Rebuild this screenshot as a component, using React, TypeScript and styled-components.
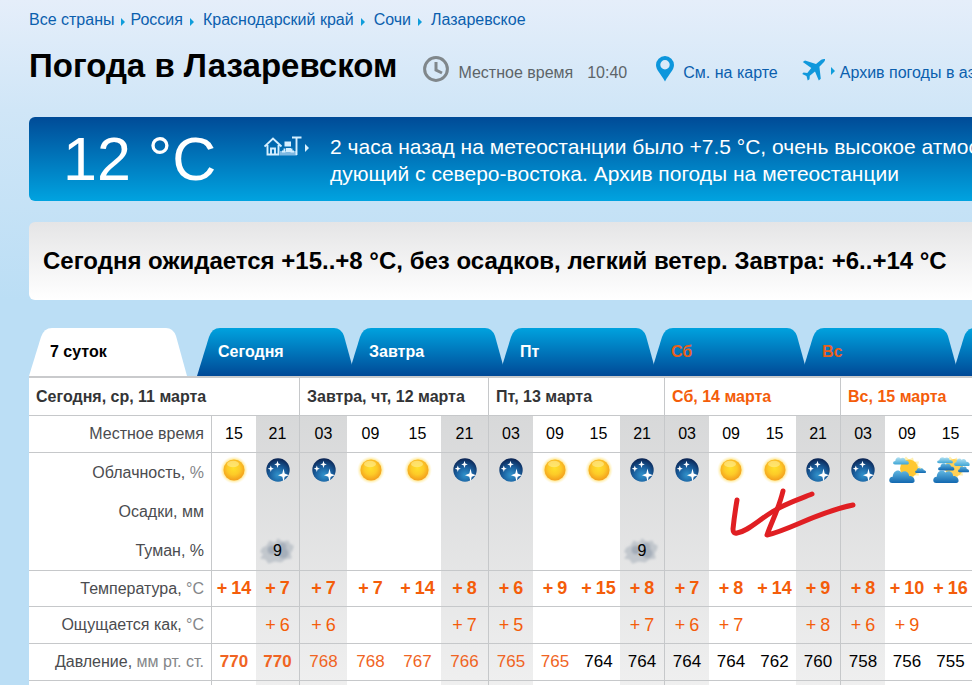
import React from 'react';
import styled, { createGlobalStyle } from 'styled-components';

const GlobalStyle = createGlobalStyle`
  * { box-sizing: border-box; }
  html { overflow-x: hidden; }
  body {
    margin: 0;
    min-height: 100vh;
    overflow-x: hidden;
    background: #bbdef5 linear-gradient(#e5eefa, #d0e6f7 110px, #bbdef5 300px) no-repeat;
    font-family: "Liberation Sans", Arial, sans-serif;
    font-size: 16px;
    color: #000;
  }
`;

const Page = styled.main`
  padding-left: 29px;
  overflow: hidden;
`;

const Breadcrumbs = styled.nav`
  display: flex;
  align-items: center;
  height: 40px;
  white-space: nowrap;
`;

const Link = styled.a`
  color: #0b5fae;
  text-decoration: none;
  white-space: nowrap;
  &:hover { text-decoration: underline; }
`;

const Arrow = styled.span<{ $before?: number; $after?: number; $light?: boolean }>`
  flex: none;
  margin: 3px ${p => p.$after ?? 5}px 0 ${p => p.$before ?? 7}px;
  border: 4px solid transparent;
  border-left-color: ${p => (p.$light ? '#d8f1ff' : '#0f9ddb')};
  border-right-width: 0;
`;

const TitleRow = styled.header`
  display: flex;
  align-items: center;
  height: 56px;
  padding-top: 2px;
  white-space: nowrap;
`;

const Title = styled.h1`
  margin: 0 26px 6px 0;
  font-size: 33px;
  line-height: 40px;
`;

const Meta = styled.div<{ $gap: number; $after: number }>`
  display: flex;
  align-items: center;
  gap: ${p => p.$gap}px;
  margin-right: ${p => p.$after}px;
  color: #5d6468;
  svg { flex: none; }
`;

const MetaText = styled.span`
  padding-top: 8px;
`;

const Clock = styled.time`
  padding: 8px 0 0 5px;
`;

const Current = styled.section`
  display: flex;
  height: 84px;
  margin-top: 21px;
  padding-left: 34px;
  border-radius: 6px 0 0 6px;
  background: linear-gradient(#004b97, #00a3e0);
  color: #fff;
  white-space: nowrap;
`;

const Temperature = styled.div`
  width: 201px;
  flex: none;
  font-size: 61px;
  line-height: 84px;
`;

const Station = styled.div`
  display: flex;
  flex: none;
  width: 66px;
  height: 24px;
  margin-top: 17px;
  align-items: center;
`;

const Report = styled.p`
  margin: 16px 0 0;
  font-size: 21px;
  line-height: 27px;
`;

const Forecast = styled.h2`
  height: 78px;
  margin: 21px 0 0;
  padding-left: 14px;
  border-radius: 6px 0 0 6px;
  background: linear-gradient(#e5e5e6, #fff);
  font-size: 24px;
  line-height: 78px;
  white-space: nowrap;
`;

const Tabs = styled.div`
  display: flex;
  margin-top: 28px;
  border-bottom: 2px solid #c9cacc;
`;

const Tab = styled.button<{ $active?: boolean; $holiday?: boolean }>`
  flex: none;
  width: 158px;
  height: 48px;
  margin: 0 ${p => (p.$active ? 10 : -7)}px 0 0;
  padding: 0 21px;
  border: 0;
  background: ${p => (p.$active ? '#fff' : 'linear-gradient(#00a2de, #004996)')};
  clip-path: path("M0 48 L12 9 Q15 0 23 0 H137 Q144 0 147 8 L158 48 Z");
  color: ${p => (p.$active ? '#000' : p.$holiday ? '#e8601c' : '#fff')};
  font: bold 16px/48px "Liberation Sans", Arial, sans-serif;
  text-align: left;
  cursor: pointer;
`;

const Board = styled.div`
  position: relative;
  background: #fff;
`;

const Table = styled.table`
  width: 100%;
  table-layout: fixed;
  border-collapse: separate;
  border-spacing: 0;
`;

const Column = styled.col<{ $width?: number; $night?: boolean }>`
  width: ${p => (p.$width ? `${p.$width}px` : 'auto')};
  background: ${p => (p.$night ? 'linear-gradient(#d4d5d6, #f2f2f2)' : '#fff')};
`;

const Row = styled.tr<{ $height: number }>`
  height: ${p => p.$height}px;
`;

const line = '1px solid #c6c8ca';

const DayHead = styled.th<{ $holiday?: boolean }>`
  padding: 0 0 0 7px;
  border-bottom: ${line};
  border-right: ${line};
  background: #fff;
  color: ${p => (p.$holiday ? '#f45d0a' : '#333436')};
  font-size: 16px;
  text-align: left;
  white-space: nowrap;
  &:last-child { border-right: 0; }
`;

const RowHead = styled.th<{ $open?: boolean }>`
  padding: 0 7px 0 0;
  border-right: ${line};
  border-bottom: ${p => (p.$open ? '0' : line)};
  background: #fff;
  color: #4b4c4f;
  font-size: 16px;
  font-weight: normal;
  text-align: right;
  white-space: nowrap;
`;

const Unit = styled.span`
  color: #848689;
`;

const Cell = styled.td<{ $open?: boolean; $dayEnd?: boolean }>`
  padding: 0;
  border-bottom: ${p => (p.$open ? '0' : line)};
  border-right: ${p => (p.$dayEnd ? line : '0')};
  font-size: 16px;
  line-height: 20px;
  text-align: center;
  white-space: nowrap;
`;

const SkyBox = styled.div`
  display: flex;
  justify-content: center;
  height: 33px;
  svg { flex: none; }
`;

const Degrees = styled.span<{ $strong?: boolean }>`
  display: inline-flex;
  gap: 4px;
  color: #f45d0a;
  font-size: 18px;
  font-weight: ${p => (p.$strong ? 'bold' : 'normal')};
`;

const Pressure = styled.span<{ $level: string }>`
  color: ${p => (p.$level === 'n' ? '#000' : '#f06423')};
  font-size: 17px;
  font-weight: ${p => (p.$level === 'b' ? 'bold' : 'normal')};
`;

const FogBadge = styled.div`
  display: grid;
  place-items: center;
  > * { grid-area: 1 / 1; }
`;

const FogValue = styled.span`
  z-index: 1;
`;

const Marks = styled.svg`
  position: absolute;
  left: 699px;
  top: 106px;
  pointer-events: none;
`;

const ClockIcon = () => (
  <svg width="26" height="26" viewBox="0 0 26 26" fill="none" stroke="#80878b" aria-hidden="true">
    <circle cx="13" cy="13" r="11.4" strokeWidth="3" />
    <path d="M13 6v8l6 3" strokeWidth="3" />
  </svg>
);

const PinIcon = () => (
  <svg width="18" height="26" viewBox="0 0 18 26" aria-hidden="true">
    <path fill="#0d96dc" fillRule="evenodd" d="M9 0a9 9 0 0 1 9 9c0 5-5 9-9 16.500C5 18 0 14 0 9a9 9 0 0 1 9-9Zm0 4a4.700 4.700 0 1 0 0 9.400A4.700 4.700 0 0 0 9 4Z" />
  </svg>
);

const PlaneIcon = () => (
  <svg width="24" height="26" viewBox="0 -3 24 26" fill="#1098dc" aria-hidden="true">
    <path d="M23 0c-2-.4-3.600.5-5 1.700L14 5 3 1.500.8 3l8.500 6-4 5L1.500 13.600.2 15l4.300 2 1.200 4.500L7.500 20.300l.3-3.600 5.200-4.200 3.800 9 2-1.700-1.400-12 3.600-3.700C22.500 2.500 23.300 1.300 23 0Z" />
  </svg>
);

const StationIcon = () => (
  <svg width="38" height="20" viewBox="0 0 38 20" fill="none" stroke="#d5efff" strokeWidth="1.900" aria-hidden="true">
    <path d="M.5 10.500 9 2.500l8.500 8M3.500 9v9.500h11V9M7 18.500v-6h4v6" />
    <path d="M16 15h17v4.500H16z" fill="#7fb9e2" stroke="none" />
    <path d="M20.500 5.500h6.500v5h-6.500zM22 12h5v4h-5z" fill="#d5efff" stroke="none" />
    <path d="M18 15.500h2.500v-3m7 0v3H30M32.500 19V1.500M28 1.500h9.500" />
  </svg>
);

const Sun = () => (
  <svg width="28" height="28" viewBox="0 0 28 28" role="img" aria-label="ясно">
    <defs>
      <radialGradient id="sunGlow">
        <stop offset=".7" stopColor="#ffdf6b" />
        <stop offset="1" stopColor="#fff4c4" stopOpacity="0" />
      </radialGradient>
      <radialGradient id="sunFace" cx=".48" cy=".42" r=".6">
        <stop offset="0" stopColor="#ffe02b" />
        <stop offset=".5" stopColor="#fdcb28" />
        <stop offset="1" stopColor="#f29a1c" />
      </radialGradient>
    </defs>
    <circle cx="14" cy="14" r="14" fill="url(#sunGlow)" />
    <circle cx="14" cy="14" r="10.500" fill="url(#sunFace)" />
    <ellipse cx="13" cy="8" rx="6" ry="3.200" fill="#fff0a0" opacity=".55" />
  </svg>
);

const Night = () => (
  <svg width="28" height="28" viewBox="-2 -2 28 28" role="img" aria-label="ясная ночь">
    <defs>
      <radialGradient id="nightSky" cx=".5" cy=".72" r=".7">
        <stop offset="0" stopColor="#3193cc" />
        <stop offset=".5" stopColor="#1a609f" />
        <stop offset="1" stopColor="#0b2554" />
      </radialGradient>
    </defs>
    <circle cx="12" cy="12" r="11.700" fill="url(#nightSky)" />
    <g fill="#fff">
      <path d="m17.500 10.500 1.200 5 4.300 1.700-4.300 1.500-1.200 5-1.200-5-4.300-1.500 4.300-1.700Z" />
      <path d="m11.500 2.800.9 2.700 2.400.9-2.400.9-.9 2.700-.9-2.700-2.400-.9 2.400-.9Z" />
      <path d="m4.800 7.500.8 2.300 2.200.9-2.200.9-.8 2.300-.8-2.300-2.200-.9 2.200-.9Z" />
    </g>
  </svg>
);

const cloudShape = 'M3 12C-1 12-.5 7 3.500 7 4 2 9 .5 11.500 3.500 16 1 19 4 19 6.500 24 6 26 12 22 12Z';

const CloudDefs = () => (
  <defs>
    <linearGradient id="cloudDark" x2="0" y2="1">
      <stop offset="0" stopColor="#62b8e2" />
      <stop offset="1" stopColor="#1268b0" />
    </linearGradient>
    <linearGradient id="cloudLight" x2="0" y2="1">
      <stop offset="0" stopColor="#b5e2f2" />
      <stop offset="1" stopColor="#3fa6d6" />
    </linearGradient>
  </defs>
);

const PartlyCloudy = () => (
  <svg width="38" height="28" viewBox="0 0 38 28" role="img" aria-label="облачно">
    <CloudDefs />
    <path d="m12 2 3 2L18 .5l3 3 4-2 1 4 5 0-1 4 4 3-4 2 1 5-5 0-1 5-4-3Z" fill="#fff0b0" />
    <circle cx="21" cy="12.500" r="9" fill="#ffc832" />
    <path d={cloudShape} fill="url(#cloudLight)" transform="translate(5 0) scale(.66 .7)" />
    <path d={cloudShape} fill="url(#cloudDark)" transform="translate(27 11) scale(.46 .5)" />
    <path d={cloudShape} fill="url(#cloudDark)" transform="translate(1 12) scale(1.060 1.250)" />
  </svg>
);

const MostlyCloudy = () => (
  <svg width="38" height="28" viewBox="0 0 38 28" role="img" aria-label="переменная облачность">
    <CloudDefs />
    <path d="m12 2 3 2L18 .5l3 3 4-2 1 4 5 0-1 4 4 3-4 2 1 5-5 0-1 5-4-3Z" fill="#fff0b0" />
    <circle cx="22" cy="12" r="9" fill="#ffd056" />
    <path d={cloudShape} fill="url(#cloudLight)" transform="translate(5 0) scale(.66 .6)" />
    <path d={cloudShape} fill="url(#cloudLight)" transform="translate(22 1) scale(.65 .75)" />
    <path d={cloudShape} fill="url(#cloudDark)" transform="translate(6 6) scale(.68 .7)" />
    <path d={cloudShape} fill="url(#cloudDark)" transform="translate(26 9) scale(.46 .6)" />
    <path d={cloudShape} fill="url(#cloudDark)" transform="translate(1 12) scale(1.060 1.250)" />
  </svg>
);

const Fog = () => (
  <svg width="38" height="28" viewBox="0 0 36 26" aria-hidden="true">
    <defs>
      <filter id="fogBlur" x="-20%" y="-20%" width="140%" height="140%">
        <feGaussianBlur stdDeviation="1.200" />
      </filter>
    </defs>
    <g filter="url(#fogBlur)" fill="#b9bfc7">
      <path d="M3 10 7 8 10 3l5 2 3-4 4 3 6-1 1 3 4 2-1 4-2 3 1 5-6 1-4 3-6-1-6 2-3-4-5-1 3-4-3-2Z" opacity=".8" />
      <circle cx="12" cy="12" r="4" fill="#a3acb8" />
      <circle cx="22" cy="9" r="4" fill="#a9b1bc" />
      <circle cx="23" cy="15" r="5" fill="#a6afba" />
    </g>
  </svg>
);

type Sky = 'sun' | 'night' | 'partly' | 'mostly';
type Hour = {
  time: string; width?: number; sky: Sky; fog?: number;
  temp: number; feels?: number; pressure: number; level: 'b' | 'h' | 'n';
};
type Day = { name: string; holiday?: boolean; hours: Hour[] };

const h = (time: string, width: number | undefined, sky: Sky, temp: number, feels: number | undefined,
  pressure: number, level: Hour['level'], fog?: number): Hour =>
  ({ time, width, sky, temp, feels, pressure, level, fog });

const days: Day[] = [
  { name: 'Сегодня, ср, 11 марта', hours: [
    h('15', 44, 'sun', 14, undefined, 770, 'b'),
    h('21', 44, 'night', 7, 6, 770, 'b', 9),
  ] },
  { name: 'Завтра, чт, 12 марта', hours: [
    h('03', 47, 'night', 7, 6, 768, 'h'),
    h('09', 47, 'sun', 7, undefined, 768, 'h'),
    h('15', 47, 'sun', 14, undefined, 767, 'h'),
    h('21', 48, 'night', 8, 7, 766, 'h'),
  ] },
  { name: 'Пт, 13 марта', hours: [
    h('03', 44, 'night', 6, 5, 765, 'h'),
    h('09', 44, 'sun', 9, undefined, 765, 'h'),
    h('15', 43, 'sun', 15, undefined, 764, 'n'),
    h('21', 45, 'night', 8, 7, 764, 'n', 9),
  ] },
  { name: 'Сб, 14 марта', holiday: true, hours: [
    h('03', 44, 'night', 7, 6, 764, 'n'),
    h('09', 44, 'sun', 8, 7, 764, 'n'),
    h('15', 43, 'sun', 14, undefined, 762, 'n'),
    h('21', 45, 'night', 9, 8, 760, 'n'),
  ] },
  { name: 'Вс, 15 марта', holiday: true, hours: [
    h('03', 44, 'night', 8, 6, 758, 'n'),
    h('09', 44, 'partly', 10, 9, 756, 'n'),
    h('15', undefined, 'mostly', 16, undefined, 755, 'n'),
  ] },
];

const hours = days.flatMap((day, d) =>
  day.hours.map((hour, i) => ({
    ...hour,
    id: `${d}-${hour.time}`,
    dayEnd: i === day.hours.length - 1 && d < days.length - 1,
  })));

const skyIcons = { sun: Sun, night: Night, partly: PartlyCloudy, mostly: MostlyCloudy };

type DataRowProps = {
  label: React.ReactNode; height: number; open?: boolean;
  render: (hour: Hour) => React.ReactNode;
};

const DataRow = ({ label, height, open, render }: DataRowProps) => (
  <Row $height={height}>
    <RowHead scope="row" $open={open}>{label}</RowHead>
    {hours.map(hour => (
      <Cell key={hour.id} $open={open} $dayEnd={hour.dayEnd}>{render(hour)}</Cell>
    ))}
  </Row>
);

const Signed = ({ value, strong }: { value: number; strong?: boolean }) => (
  <Degrees $strong={strong}><span>+</span><span>{value}</span></Degrees>
);

const tabs = [
  { label: '7 суток', active: true },
  { label: 'Сегодня' },
  { label: 'Завтра' },
  { label: 'Пт' },
  { label: 'Сб', holiday: true },
  { label: 'Вс', holiday: true },
  { label: '', name: 'Следующий день' },
];

export default function App() {
  return (
    <>
      <GlobalStyle />
      <Page>
        <Breadcrumbs aria-label="Навигация">
          <Link href="#world">Все страны</Link><Arrow />
          <Link href="#russia">Россия</Link><Arrow $after={9} />
          <Link href="#krasnodar">Краснодарский край</Link><Arrow $after={9} />
          <Link href="#sochi">Сочи</Link><Arrow $after={9} />
          <Link href="#lazarevskoe">Лазаревское</Link>
        </Breadcrumbs>
        <TitleRow>
          <Title>Погода в Лазаревском</Title>
          <Meta $gap={9} $after={29}>
            <ClockIcon />
            <MetaText>Местное время</MetaText>
            <Clock>10:40</Clock>
          </Meta>
          <Meta $gap={9} $after={24}>
            <PinIcon />
            <MetaText><Link href="#map">См. на карте</Link></MetaText>
          </Meta>
          <Meta $gap={5} $after={0}>
            <PlaneIcon />
            <Arrow $before={0} $after={0} />
            <MetaText><Link href="#airport">Архив погоды в аэ</Link></MetaText>
          </Meta>
        </TitleRow>
        <Current>
          <Temperature>12 °C</Temperature>
          <Station><StationIcon /><Arrow $before={3} $after={0} $light /></Station>
          <Report>
            2 часа назад на метеостанции было +7.5 °C, очень высокое атмосф<br />
            дующий с северо-востока. Архив погоды на метеостанции
          </Report>
        </Current>
        <Forecast>Сегодня ожидается +15..+8 °C, без осадков, легкий ветер. Завтра: +6..+14 °C</Forecast>
        <Tabs role="tablist">
          {tabs.map(tab => (
            <Tab key={tab.label} type="button" role="tab" aria-selected={!!tab.active}
              aria-label={tab.name} $active={tab.active} $holiday={tab.holiday}>{tab.label}</Tab>
          ))}
        </Tabs>
        <Board>
          <Table>
            <colgroup>
              <Column $width={183} />
              {hours.map(hour => (
                <Column key={hour.id} $width={hour.width} $night={hour.time === '21' || hour.time === '03'} />
              ))}
            </colgroup>
            <tbody>
              <Row $height={38}>
                {days.map((day, i) => (
                  <DayHead key={day.name} scope="colgroup" $holiday={day.holiday}
                    colSpan={day.hours.length + (i === 0 ? 1 : 0)}>{day.name}</DayHead>
                ))}
              </Row>
              <DataRow label="Местное время" height={37} render={hour => hour.time} />
              <DataRow label={<>Облачность, <Unit>%</Unit></>} height={39} open render={hour => {
                const Icon = skyIcons[hour.sky];
                return <SkyBox><Icon /></SkyBox>;
              }} />
              <DataRow label="Осадки, мм" height={39} open render={() => null} />
              <DataRow label="Туман, %" height={40} render={hour =>
                hour.fog ? <FogBadge><Fog /><FogValue>{hour.fog}</FogValue></FogBadge> : null} />
              <DataRow label={<>Температура, <Unit>°C</Unit></>} height={36}
                render={hour => <Signed value={hour.temp} strong />} />
              <DataRow label={<>Ощущается как, <Unit>°C</Unit></>} height={37}
                render={hour => (hour.feels ? <Signed value={hour.feels} /> : null)} />
              <DataRow label={<>Давление, <Unit>мм рт. ст.</Unit></>} height={37}
                render={hour => <Pressure $level={hour.level}>{hour.pressure}</Pressure>} />
              <DataRow label="" height={37} open render={() => null} />
            </tbody>
          </Table>
          <Marks width="130" height="56" viewBox="0 0 130 56" fill="none" stroke="#e01f23"
            strokeWidth="5" strokeLinecap="round" strokeLinejoin="round" aria-hidden="true">
            <path d="M9 16C7 28 6 35 5 45Q5 50 9 49C20 47 28 38 44 28C58 19 72 15 84 10" />
            <path d="M55 7C51 24 44 37 39 51C62 46 87 29 125 21" />
          </Marks>
        </Board>
      </Page>
    </>
  );
}
